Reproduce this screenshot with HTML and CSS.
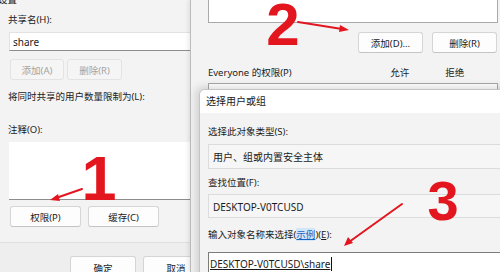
FILE: index.html
```html
<!DOCTYPE html>
<html lang="zh-CN">
<head>
    <meta charset="UTF-8">
    <title>共享权限 - 选择用户或组</title>
    <link rel="stylesheet" href="styles.css">
</head>
<body>
    <div class="desk">
        <!-- 高级共享 -->
        <section class="win win-share">
            <div class="group-title">设置</div>
            <div class="label">共享名(H):</div>
            <div class="field">share</div>
            <div class="btn-row">
                <span class="btn btn-sm disabled">添加(A)</span>
                <span class="btn btn-sm disabled">删除(R)</span>
            </div>
            <div class="label label-limit">将同时共享的用户数量限制为(L):</div>
            <div class="label label-note">注释(O):</div>
            <div class="note-box"></div>
            <div class="btn-row btn-row-perm">
                <span class="btn btn-md">权限(P)</span>
                <span class="btn btn-md">缓存(C)</span>
            </div>
            <div class="win-footer">
                <span class="btn btn-ok">确定</span>
                <span class="btn btn-ok">取消</span>
            </div>
        </section>

        <!-- 共享权限 -->
        <section class="win win-perm">
            <div class="list-box"></div>
            <div class="btn-row btn-row-right">
                <span class="btn btn-wide">添加(D)...</span>
                <span class="btn btn-wide">删除(R)</span>
            </div>
            <div class="perm-head">
                <span class="perm-name">Everyone 的权限(P)</span>
                <span class="perm-col">允许</span>
                <span class="perm-col">拒绝</span>
            </div>
            <div class="perm-table"></div>
        </section>

        <!-- 选择用户或组 -->
        <section class="win win-pick">
            <div class="title-bar">选择用户或组</div>
            <div class="pick-body">
                <div class="label label-first">选择此对象类型(S):</div>
                <div class="ro-box">用户、组或内置安全主体</div>
                <div class="label label-loc">查找位置(F):</div>
                <div class="ro-box ro-loc">DESKTOP-V0TCUSD</div>
                <div class="label label-name">输入对象名称来选择(<span class="link">示例</span>)(<u>E</u>):</div>
                <div class="name-input"><span class="typed">DESKTOP-V0TCUSD\share</span></div>
            </div>
        </section>

        <!-- 红色标注 -->
        <svg class="marks" width="500" height="272" viewBox="0 0 500 272">
            <g stroke="#e3161f" stroke-width="2" stroke-linecap="round">
                <line x1="82" y1="189" x2="56" y2="198"/>
                <line x1="298" y1="22" x2="342" y2="29"/>
                <line x1="402" y1="204" x2="349" y2="242"/>
            </g>
            <g fill="#e3161f">
                <polygon points="50,200 58,194 60,201"/>
                <polygon points="349,30 340,25 339,32"/>
                <polygon points="344,246 348,237 353,243"/>
                <text x="99" y="200" class="num">1</text>
                <text x="283" y="45" class="num num-2">2</text>
                <text x="443" y="220" class="num num-3">3</text>
            </g>
        </svg>
    </div>
</body>
</html>
```

FILE: styles.css
```css
body {
    margin: 0;
    padding: 0;
    background-color: #e9e9e9;
    font-family: "Noto Sans", "Noto Sans CJK SC", sans-serif;
    font-size: 9.5px;
    color: #1b1b1b;
}
.desk {
    position: relative;
    width: 500px;
    height: 272px;
    overflow: hidden;
}
.win {
    position: absolute;
    box-sizing: border-box;
    background-color: #f3f3f3;
    overflow: hidden;
}
.label {
    height: 14px;
    line-height: 14px;
    white-space: nowrap;
}
.btn {
    display: flex;
    align-items: center;
    justify-content: center;
    box-sizing: border-box;
    height: 21px;
    background-color: #fdfdfd;
    border: 1px solid #d5d5d5;
    border-bottom-color: #c4c4c4;
    border-radius: 3px;
    white-space: nowrap;
}
.btn.disabled {
    background-color: #f5f5f5;
    border-color: #e3e3e3;
    color: #a3a3a3;
}
.btn-row {
    display: flex;
    gap: 3px;
}

/* 高级共享 */
.win-share {
    left: 0;
    top: 0;
    width: 260px;
    height: 272px;
    padding-left: 8px;
}
.group-title {
    height: 12px;
    line-height: 12px;
    margin-top: -6px;
    margin-left: -10px;
}
.win-share .group-title + .label {
    margin-top: 7px;
}
.field {
    margin-top: 5px;
    margin-left: 1px;
    height: 19px;
    box-sizing: border-box;
    padding-left: 3px;
    line-height: 18px;
    font-size: 10px;
    background-color: #fff;
    border: 1px solid #e2e2e2;
    border-bottom-color: #8d8d8d;
}
.win-share .btn-row {
    margin-top: 8px;
    margin-left: 2px;
}
.btn-sm {
    width: 54px;
}
.btn-sm + .btn-sm {
    width: 55px;
}
.label-limit {
    margin-top: 10px;
}
.label-note {
    margin-top: 19px;
}
.note-box {
    margin-top: 5px;
    margin-left: 1px;
    height: 58px;
    background-color: #fff;
    border-bottom: 1px solid #8d8d8d;
    box-sizing: border-box;
}
.win-share .btn-row-perm {
    margin-top: 6px;
    gap: 7px;
}
.btn-md {
    width: 71px;
}
.win-footer {
    margin-top: 15px;
    margin-left: -8px;
    height: 40px;
    border-top: 1px solid #e0e0e0;
    background-color: #eeeeee;
    padding: 13px 0 0 70px;
    display: flex;
    gap: 7px;
}
.btn-ok {
    width: 66px;
    height: 24px;
}

/* 共享权限 */
.win-perm {
    left: 190px;
    top: 0;
    width: 310px;
    height: 272px;
    padding-left: 17px;
    border-left: 1px solid #bcbcbc;
    box-shadow: -2px 0 4px rgba(0, 0, 0, 0.08);
}
.list-box {
    margin-top: -10px;
    width: 290px;
    height: 33px;
    box-sizing: border-box;
    background-color: #fff;
    border: 1px solid #a9a9a9;
}
.btn-row-right {
    margin-top: 9px;
    padding-left: 150px;
    gap: 9px;
}
.btn-wide {
    width: 65px;
}
.perm-head {
    margin-top: 13px;
    height: 14px;
    line-height: 14px;
    display: flex;
    white-space: nowrap;
}
.perm-name {
    width: 186px;
}
.perm-col {
    width: 56px;
}
.perm-table {
    margin-top: 3px;
    width: 290px;
    height: 60px;
    box-sizing: border-box;
    background-color: #fff;
    border: 1px solid #a9a9a9;
}

/* 选择用户或组 */
.win-pick {
    left: 199px;
    top: 89px;
    width: 320px;
    height: 200px;
    border: 1px solid #c4c4c4;
    border-radius: 6px 0 0 0;
    box-shadow: -3px -2px 8px rgba(0, 0, 0, 0.15);
}
.title-bar {
    height: 23px;
    line-height: 22px;
    padding-left: 6px;
    background-color: #fff;
    font-size: 10px;
}
.pick-body {
    padding-left: 8px;
}
.label-first {
    margin-top: 12px;
}
.ro-box {
    margin-top: 5px;
    height: 25px;
    line-height: 24px;
    box-sizing: border-box;
    padding-left: 4px;
    background-color: #f6f6f6;
    border: 1px solid #dcdcdc;
    border-right: none;
    font-size: 10px;
}
.label-loc {
    margin-top: 7px;
}
.ro-loc {
    margin-top: 4px;
    height: 24px;
}
.label-name {
    margin-top: 10px;
}
.link {
    color: #1565c0;
    background-color: #d3e6f8;
    text-decoration: underline;
}
.name-input {
    margin-top: 10px;
    height: 30px;
    box-sizing: border-box;
    padding: 4px 0 0 1px;
    background-color: #fff;
    border: 1px solid #7c7c7c;
    border-right: none;
    font-size: 10px;
}
.typed {
    text-decoration: underline;
    padding-right: 1px;
    border-right: 1px solid #111;
}

/* 红色标注 */
.marks {
    position: absolute;
    left: 0;
    top: 0;
}
.num {
    font-family: "Liberation Sans", Arial, sans-serif;
    font-weight: bold;
    font-size: 63px;
    text-anchor: middle;
}
.num-2 {
    font-size: 60px;
}
.num-3 {
    font-size: 56px;
}
```
